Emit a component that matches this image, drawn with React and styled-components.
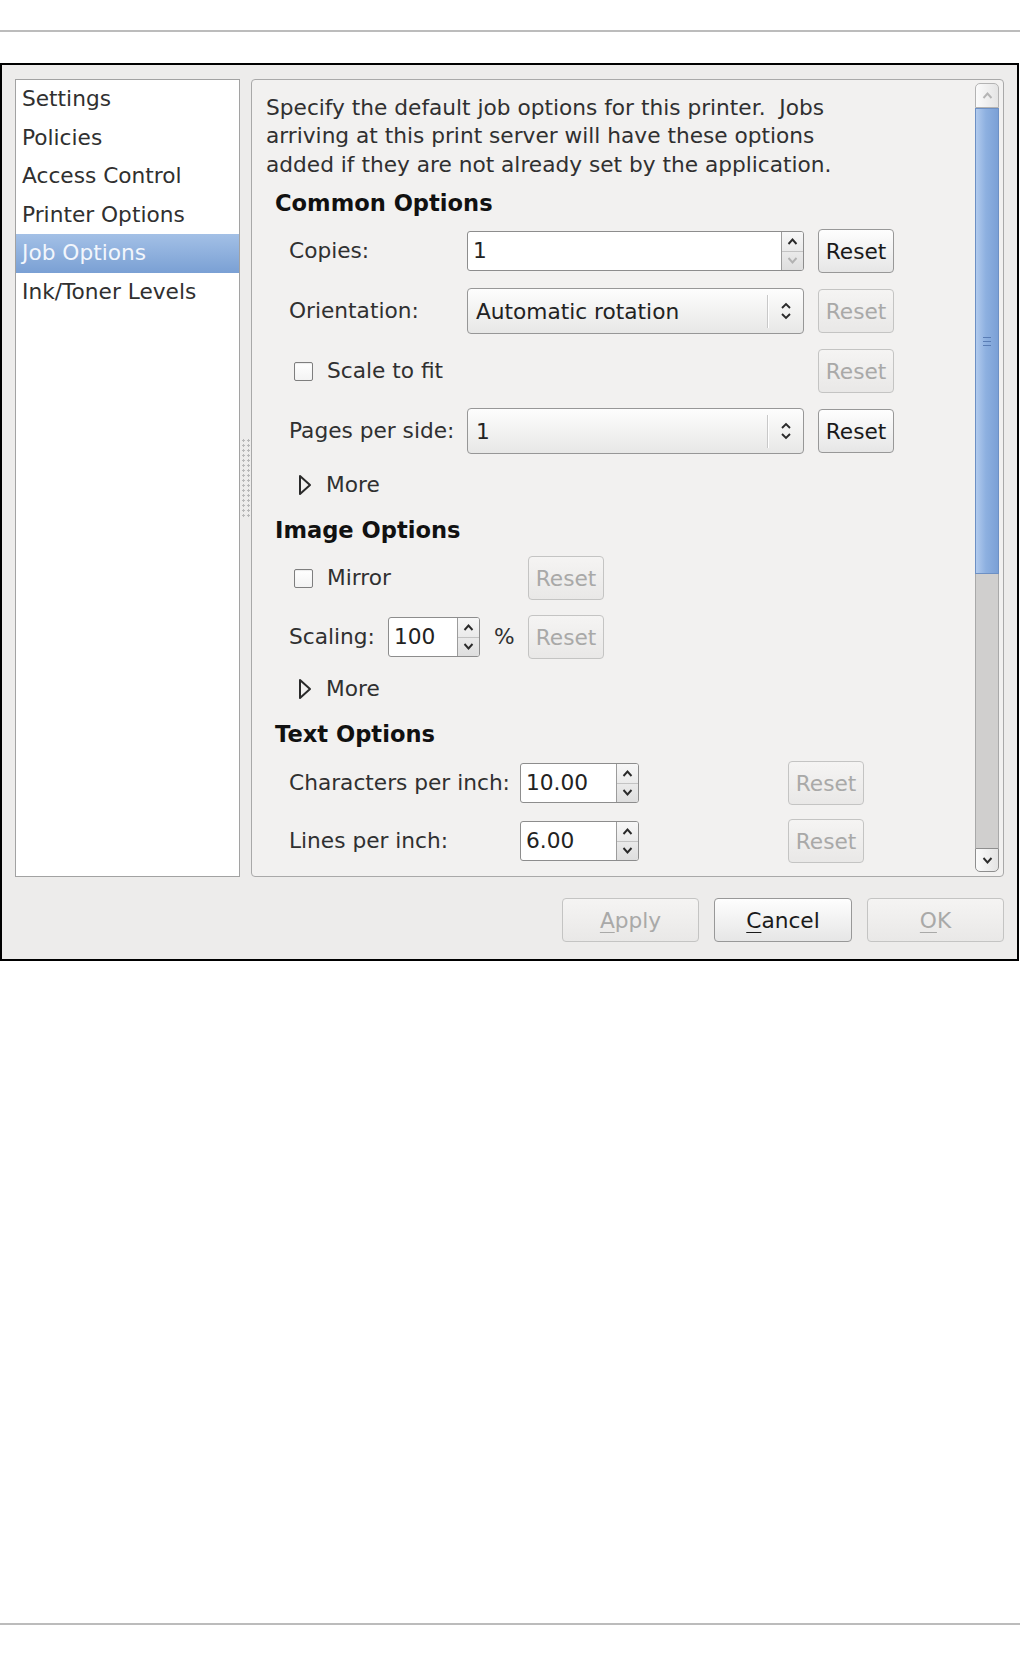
import React from 'react';
import styled, { createGlobalStyle } from 'styled-components';

const GlobalStyle = createGlobalStyle`
  html, body { margin: 0; padding: 0; background: #ffffff; }
  body { font-family: "DejaVu Sans", "Noto Sans", sans-serif; }
  * { box-sizing: border-box; }
`;

const Page = styled.div`
  width: 1020px;
  height: 1656px;
  display: flex;
  flex-direction: column;
`;

const Rule = styled.div`
  height: 2px;
  width: 1020px;
  background: #bcbcbc;
  margin-top: ${p => p.$top}px;
`;

const Dialog = styled.div`
  margin-top: 31px;
  width: 1019px;
  border: 2px solid #000;
  background: #edeceb;
  padding: 14px 13px 17px 13px;
  display: flex;
  flex-direction: column;
  font-size: 21.7px;
  color: #303030;
`;

const Content = styled.div`
  display: flex;
  height: 798px;
`;

const Sidebar = styled.div`
  width: 225px;
  border: 1px solid #a2a2a2;
  background: #fff;
  padding: 0;
`;

const SideItem = styled.div`
  height: 38.6px;
  line-height: 38.6px;
  padding-left: 6px;
  white-space: nowrap;
  color: ${p => (p.$active ? '#f2f6fc' : '#303030')};
  background: ${p => (p.$active ? 'linear-gradient(#a3c0e6, #7aa0d4)' : 'transparent')};
`;

const Handle = styled.div`
  width: 11px;
  display: flex;
  align-items: center;
  justify-content: center;
`;

const Grip = styled.div`
  width: 10px;
  height: 80px;
  background-image: radial-gradient(circle, #b8b8b8 1.1px, transparent 1.4px);
  background-size: 5px 5px;
`;

const Panel = styled.div`
  flex: 1;
  border: 1px solid #a9a9a9;
  border-radius: 4px;
  background: #f2f1f0;
  display: flex;
  overflow: hidden;
`;

const PanelBody = styled.div`
  flex: 1;
  padding: 14px 0 0 14px;
  display: flex;
  flex-direction: column;
  align-items: flex-start;
`;

const Intro = styled.div`
  line-height: 28.4px;
  white-space: pre;
`;

const Heading = styled.div`
  font-weight: bold;
  font-size: 22.6px;
  color: #111;
  line-height: 28px;
  margin-left: 9px;
  margin-top: ${p => p.$mt}px;
`;

const FormGrid = styled.div`
  display: grid;
  grid-template-columns: ${p => p.$cols};
  column-gap: 14px;
  row-gap: ${p => p.$rowGap}px;
  align-items: center;
  margin-left: 23px;
  margin-top: ${p => p.$mt || 13}px;
`;

const Label = styled.div`
  white-space: nowrap;
  line-height: 28px;
`;

const CheckRow = styled.div`
  grid-column: ${p => p.$span};
  display: flex;
  align-items: center;
  gap: 14px;
  padding-left: 5px;
  line-height: 28px;
`;

const CheckBox = styled.span`
  width: 19px;
  height: 19px;
  border: 1px solid #7e7e7e;
  border-radius: 2px;
  background: linear-gradient(#ffffff, #f3f3f3);
  box-shadow: inset 0 1px 1px rgba(0,0,0,0.08);
`;

const ResetCell = styled.div`
  grid-column: ${p => p.$col || 'auto'};
`;

const Button = styled.div`
  width: ${p => p.$w}px;
  height: 44px;
  display: flex;
  align-items: center;
  justify-content: center;
  border: 1px solid ${p => (p.$disabled ? '#c4c4c3' : '#989898')};
  border-radius: 4px;
  background: ${p => (p.$disabled ? 'linear-gradient(#f5f4f3, #e9e8e7)' : 'linear-gradient(#fefefe, #e6e6e6)')};
  color: ${p => (p.$disabled ? '#a9a9a8' : '#1a1a1a')};
  white-space: nowrap;
  u { text-underline-offset: 4px; text-decoration-thickness: 1px; }
`;

const SpinBox = styled.div`
  width: ${p => p.$w}px;
  height: 40px;
  display: flex;
  border: 1px solid #8d8d8d;
  border-radius: 3px;
  background: #fff;
  overflow: hidden;
`;

const SpinText = styled.div`
  flex: 1;
  padding-left: 5px;
  line-height: 38px;
  color: #222;
`;

const SpinArrows = styled.div`
  width: 22px;
  border-left: 1px solid #9c9c9c;
  background: linear-gradient(#f7f7f7, #dedede);
  display: flex;
  flex-direction: column;
`;

const SpinHalf = styled.div`
  flex: 1;
  display: flex;
  align-items: center;
  justify-content: center;
  border-top: ${p => (p.$lower ? '1px solid #c3c3c3' : 'none')};
  color: ${p => (p.$dim ? '#b2b2b2' : '#2a2a2a')};
`;

const Combo = styled.div`
  width: 337px;
  height: 46px;
  display: flex;
  align-items: center;
  border: 1px solid #979797;
  border-radius: 4px;
  background: linear-gradient(#fdfdfd, #e7e7e6);
`;

const ComboText = styled.div`
  flex: 1;
  padding-left: 8px;
  color: #222;
`;

const ComboSep = styled.div`
  width: 1px;
  height: 33px;
  background: #c8c8c8;
  box-shadow: 1px 0 0 #fff;
`;

const ComboIcon = styled.div`
  width: 35px;
  display: flex;
  justify-content: center;
  color: #2a2a2a;
`;

const Expander = styled.div`
  display: flex;
  align-items: center;
  gap: 14px;
  margin-left: 32px;
  margin-top: ${p => p.$mt}px;
  line-height: 28px;
`;

const Percent = styled.div`
  line-height: 28px;
`;

const Scrollbar = styled.div`
  width: 24px;
  margin: 3px 4px 4px 0;
  display: flex;
  flex-direction: column;
`;

const ScrollBtn = styled.div`
  height: ${p => p.$h}px;
  border: 1px solid ${p => (p.$dim ? '#b3b3b3' : '#8e8e8e')};
  border-radius: ${p => (p.$top ? '5px 5px 0 0' : '0 0 5px 5px')};
  background: linear-gradient(90deg, #fbfbfb, #e4e4e4);
  display: flex;
  align-items: center;
  justify-content: center;
  color: ${p => (p.$dim ? '#b5b5b5' : '#2e2e2e')};
`;

const Thumb = styled.div`
  height: 466px;
  border: 1px solid #6d90c4;
  background: linear-gradient(90deg, #b2cbee, #8db0e0 45%, #7ba0d6);
  display: flex;
  align-items: center;
  justify-content: center;
`;

const ThumbGrip = styled.div`
  width: 8px;
  height: 9px;
  border-top: 1px solid #5a7db5;
  border-bottom: 1px solid #5a7db5;
  position: relative;
  &::after {
    content: '';
    position: absolute;
    left: 0;
    right: 0;
    top: 3px;
    height: 1px;
    background: #5a7db5;
  }
`;

const Trough = styled.div`
  flex: 1;
  background: #d0cfce;
  border-left: 1px solid #a9a9a9;
  border-right: 1px solid #a9a9a9;
`;

const Footer = styled.div`
  margin-top: 21px;
  display: flex;
  justify-content: flex-end;
  gap: 15px;
`;

const ChevUp = () => (
  <svg width="11" height="7" viewBox="0 0 11 7">
    <polyline points="1.5,6 5.5,1.5 9.5,6" fill="none" stroke="currentColor" strokeWidth="1.9" />
  </svg>
);

const ChevDown = () => (
  <svg width="11" height="7" viewBox="0 0 11 7">
    <polyline points="1.5,1 5.5,5.5 9.5,1" fill="none" stroke="currentColor" strokeWidth="1.9" />
  </svg>
);

const UpDown = () => (
  <svg width="12" height="20" viewBox="0 0 12 20">
    <polyline points="2,7 6,3 10,7" fill="none" stroke="currentColor" strokeWidth="1.9" />
    <polyline points="2,13 6,17 10,13" fill="none" stroke="currentColor" strokeWidth="1.9" />
  </svg>
);

const Triangle = () => (
  <svg width="14" height="22" viewBox="0 0 14 22">
    <polygon points="2,2 12,11 2,20" fill="none" stroke="#2a2a2a" strokeWidth="2" strokeLinejoin="round" />
  </svg>
);

const Spin = ({ w, value, downDim }) => (
  <SpinBox $w={w}>
    <SpinText>{value}</SpinText>
    <SpinArrows>
      <SpinHalf><ChevUp /></SpinHalf>
      <SpinHalf $lower $dim={downDim}><ChevDown /></SpinHalf>
    </SpinArrows>
  </SpinBox>
);

const Reset = ({ disabled, col }) => (
  <ResetCell $col={col}>
    <Button $w={76} $disabled={disabled}>Reset</Button>
  </ResetCell>
);

const sideItems = ['Settings', 'Policies', 'Access Control', 'Printer Options', 'Job Options', 'Ink/Toner Levels'];

export default function App() {
  return (
    <Page>
      <GlobalStyle />
      <Rule $top={30} />
      <Dialog>
        <Content>
          <Sidebar>
            {sideItems.map(item => (
              <SideItem key={item} $active={item === 'Job Options'}>{item}</SideItem>
            ))}
          </Sidebar>
          <Handle><Grip /></Handle>
          <Panel>
            <PanelBody>
              <Intro>
                {'Specify the default job options for this printer.  Jobs\narriving at this print server will have these options\nadded if they are not already set by the application.'}
              </Intro>

              <Heading $mt={10}>Common Options</Heading>
              <FormGrid $cols="164px 337px 76px" $rowGap={15} $mt={12}>
                <Label>Copies:</Label>
                <Spin w={337} value="1" downDim />
                <Reset />

                <Label>Orientation:</Label>
                <Combo>
                  <ComboText>Automatic rotation</ComboText>
                  <ComboSep />
                  <ComboIcon><UpDown /></ComboIcon>
                </Combo>
                <Reset disabled />

                <CheckRow $span="1 / 3"><CheckBox />Scale to fit</CheckRow>
                <Reset disabled col={3} />

                <Label>Pages per side:</Label>
                <Combo>
                  <ComboText>1</ComboText>
                  <ComboSep />
                  <ComboIcon><UpDown /></ComboIcon>
                </Combo>
                <Reset />
              </FormGrid>
              <Expander $mt={17}><Triangle />More</Expander>

              <Heading $mt={17}>Image Options</Heading>
              <FormGrid $cols="85px 92px 20px 76px" $rowGap={15} $mt={12}>
                <CheckRow $span="1 / 4"><CheckBox />Mirror</CheckRow>
                <Reset disabled col={4} />

                <Label>Scaling:</Label>
                <Spin w={92} value="100" />
                <Percent>%</Percent>
                <Reset disabled />
              </FormGrid>
              <Expander $mt={16}><Triangle />More</Expander>

              <Heading $mt={17}>Text Options</Heading>
              <FormGrid $cols="217px 119px 121px 76px" $rowGap={14} $mt={13}>
                <Label>Characters per inch:</Label>
                <Spin w={119} value="10.00" />
                <Reset disabled col={4} />

                <Label>Lines per inch:</Label>
                <Spin w={119} value="6.00" />
                <Reset disabled col={4} />
              </FormGrid>
            </PanelBody>
            <Scrollbar>
              <ScrollBtn $h={25} $top $dim><ChevUp /></ScrollBtn>
              <Thumb><ThumbGrip /></Thumb>
              <Trough />
              <ScrollBtn $h={24}><ChevDown /></ScrollBtn>
            </Scrollbar>
          </Panel>
        </Content>
        <Footer>
          <Button $w={137} $disabled><span><u>A</u>pply</span></Button>
          <Button $w={138}><span><u>C</u>ancel</span></Button>
          <Button $w={137} $disabled><span><u>O</u>K</span></Button>
        </Footer>
      </Dialog>
      <Rule $top={662} />
    </Page>
  );
}
